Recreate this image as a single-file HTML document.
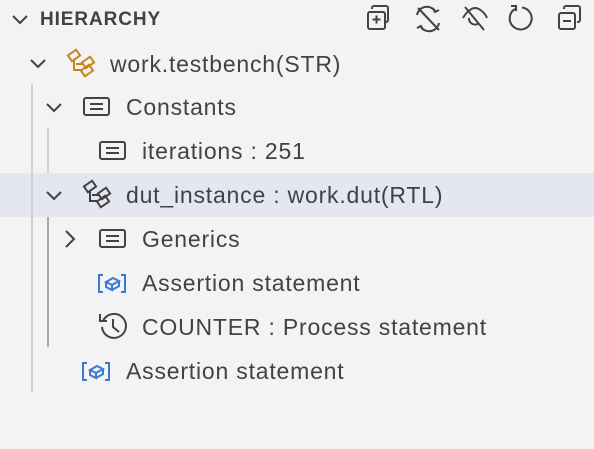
<!DOCTYPE html>
<html><head><meta charset="utf-8"><style>
body{margin:0;width:594px;height:449px;background:#f3f3f3;font-family:"Segoe UI","Liberation Sans",sans-serif;color:#424242;overflow:hidden;position:relative}
.t{position:absolute;font-size:23px;letter-spacing:0.8px;line-height:44px;white-space:nowrap}
.hl{position:absolute;left:0;top:173px;width:594px;height:44px;background:#e4e6f1}
svg{position:absolute;overflow:visible}
.g{position:absolute;width:2px}
</style></head><body>
<div class="hl"></div>
<div class="g" style="left:31px;top:84px;height:308px;background:#d0d0d0"></div>
<div class="g" style="left:47px;top:128px;height:45px;background:#cfcfcf"></div>
<div class="g" style="left:47px;top:217px;height:130px;background:#a8a8a8"></div>

<!-- header -->
<svg style="left:10px;top:12px" width="20" height="16"><path d="M3 4l7 7 7-7" fill="none" stroke="#424242" stroke-width="2"/></svg>
<div class="t" style="left:40px;top:-2px;font-size:19px;font-weight:bold;letter-spacing:0.9px">HIERARCHY</div>
<svg style="left:0;top:0" width="594" height="40" fill="none" stroke="#424242" stroke-width="2">
  <rect x="368" y="12" width="17" height="17" rx="2"/><path d="M372 9v-1a2 2 0 0 1 2-2h12a2 2 0 0 1 2 2v12a2 2 0 0 1-2 2h-1"/><path d="M376.5 15.5v8M372.5 19.5h8"/>
  <path d="M417 15a10 10 0 0 1 18-4M433 8l2 4 4-2M439 23a10 10 0 0 1-18 4M423 30l-2-4-4 2M418 8l21 22"/>
  <path d="M463 18c4-7 9-10 12-10s9 3 12 10M469 18a6 6 0 0 0 10 5M465 7l19 23"/>
  <path d="M515 9a11 11 0 1 0 7-1.5M511 6h5v5"/>
  <rect x="559" y="13" width="16" height="16" rx="2"/><path d="M564 9v-1a2 2 0 0 1 2-2h12a2 2 0 0 1 2 2v12a2 2 0 0 1-2 2h-1"/><path d="M563 21h8"/>
</svg>

<!-- row1 -->
<svg style="left:28px;top:56px" width="20" height="16"><path d="M3 4l7 7 7-7" fill="none" stroke="#424242" stroke-width="2"/></svg>
<svg style="left:67px;top:49px" width="30" height="28" fill="none" stroke="#c5851e" stroke-width="2"><rect x="2" y="3" width="10" height="7" transform="rotate(-35 7 6.5)"/><path d="M7 11v10h8M9 15h8"/><rect x="16" y="10" width="10" height="7" transform="rotate(-35 21 13.5)"/><rect x="15" y="18" width="10" height="7" transform="rotate(-35 20 21.5)"/></svg>
<div class="t" style="left:110px;top:42px">work.testbench(STR)</div>

<!-- row2 -->
<svg style="left:83px;top:97px" width="28" height="20" fill="none" stroke="#424242" stroke-width="2"><rect x="1" y="1" width="25" height="17" rx="2"/><path d="M7 7h13M7 12h13"/></svg>
<svg style="left:44px;top:100px" width="20" height="16"><path d="M3 4l7 7 7-7" fill="none" stroke="#424242" stroke-width="2"/></svg>
<div class="t" style="left:126px;top:85px">Constants</div>

<!-- row3 -->
<svg style="left:99px;top:141px" width="28" height="20" fill="none" stroke="#424242" stroke-width="2"><rect x="1" y="1" width="25" height="17" rx="2"/><path d="M7 7h13M7 12h13"/></svg>
<div class="t" style="left:142px;top:129px">iterations : 251</div>

<!-- row4 -->
<svg style="left:44px;top:188px" width="20" height="16"><path d="M3 4l7 7 7-7" fill="none" stroke="#424242" stroke-width="2"/></svg>
<svg style="left:83px;top:180px" width="30" height="28" fill="none" stroke="#424242" stroke-width="2"><rect x="2" y="3" width="10" height="7" transform="rotate(-35 7 6.5)"/><path d="M7 11v10h8M9 15h8"/><rect x="16" y="10" width="10" height="7" transform="rotate(-35 21 13.5)"/><rect x="15" y="18" width="10" height="7" transform="rotate(-35 20 21.5)"/></svg>
<div class="t" style="left:126px;top:173px">dut_instance : work.dut(RTL)</div>

<!-- row5 -->
<svg style="left:62px;top:229px" width="16" height="20"><path d="M4 2l8 8-8 8" fill="none" stroke="#424242" stroke-width="2"/></svg>
<svg style="left:99px;top:229px" width="28" height="20" fill="none" stroke="#424242" stroke-width="2"><rect x="1" y="1" width="25" height="17" rx="2"/><path d="M7 7h13M7 12h13"/></svg>
<div class="t" style="left:142px;top:217px">Generics</div>

<!-- row6 -->
<svg style="left:98px;top:274px" width="30" height="20" fill="none" stroke="#3b78d4" stroke-width="2"><path d="M5 1H1v17h4M23 1h4v17h-4"/><path d="M8 8l7-4 6 3-7 4zM8 8v5l6 3v-5M21 7v5l-7 4"/></svg>
<div class="t" style="left:142px;top:261px">Assertion statement</div>

<!-- row7 -->
<svg style="left:98px;top:311px" width="30" height="30" fill="none" stroke="#424242" stroke-width="2"><path d="M5 10a12 12 0 1 1-1 6"/><path d="M2 3v7h7"/><path d="M15 8v8l6 5"/></svg>
<div class="t" style="left:142px;top:305px">COUNTER : Process statement</div>

<!-- row8 -->
<svg style="left:82px;top:362px" width="30" height="20" fill="none" stroke="#3b78d4" stroke-width="2"><path d="M5 1H1v17h4M23 1h4v17h-4"/><path d="M8 8l7-4 6 3-7 4zM8 8v5l6 3v-5M21 7v5l-7 4"/></svg>
<div class="t" style="left:126px;top:349px">Assertion statement</div>
</body></html>
